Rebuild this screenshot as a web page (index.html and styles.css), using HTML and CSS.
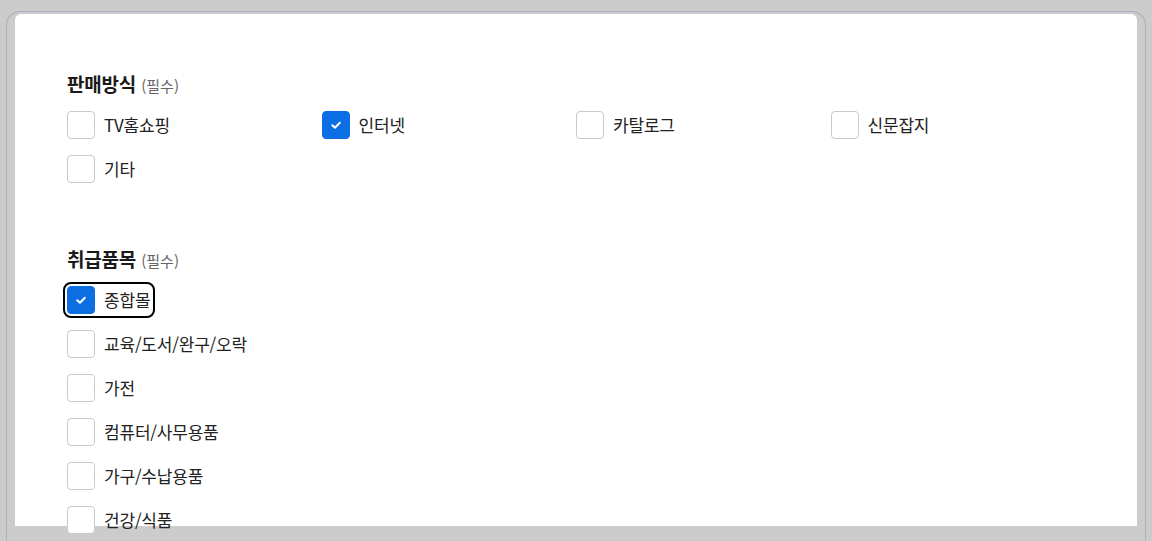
FILE: index.html
```html
<!DOCTYPE html>
<html lang="ko">
<head>
<meta charset="utf-8">
<link rel="stylesheet" href="styles.css">
</head>
<body>
<div class="frame">
  <div class="panel">
    <section class="group">
      <h2 class="title">판매방식 <span class="req">(필수)</span></h2>
      <div class="grid four">
        <label class="opt"><span class="box"></span><span class="txt">TV홈쇼핑</span></label>
        <label class="opt"><span class="box on"><svg viewBox="0 0 12 12"><path d="M3.2 6.2 5.2 8.1 8.9 4.3"/></svg></span><span class="txt">인터넷</span></label>
        <label class="opt"><span class="box"></span><span class="txt">카탈로그</span></label>
        <label class="opt"><span class="box"></span><span class="txt">신문잡지</span></label>
        <label class="opt"><span class="box"></span><span class="txt">기타</span></label>
      </div>
    </section>
    <section class="group second">
      <h2 class="title">취급품목 <span class="req">(필수)</span></h2>
      <div class="grid one">
        <label class="opt focus"><span class="box on"><svg viewBox="0 0 12 12"><path d="M3.2 6.2 5.2 8.1 8.9 4.3"/></svg></span><span class="txt">종합몰</span></label>
        <label class="opt"><span class="box"></span><span class="txt">교육/도서/완구/오락</span></label>
        <label class="opt"><span class="box"></span><span class="txt">가전</span></label>
        <label class="opt"><span class="box"></span><span class="txt">컴퓨터/사무용품</span></label>
        <label class="opt"><span class="box"></span><span class="txt">가구/수납용품</span></label>
        <label class="opt"><span class="box"></span><span class="txt">건강/식품</span></label>
      </div>
    </section>
  </div>
</div>
</body>
</html>
```
FILE: styles.css
```css
html, body {
  margin: 0;
  padding: 0;
  height: 541px;
  overflow: hidden;
  background: #cccccc;
  font-family: "Noto Sans CJK KR", "Noto Sans", sans-serif;
  color: #222;
}
.frame {
  margin: 11px 0 0 6px;
  width: 1122px;
  height: 700px;
  border: 1px solid #a9b0c4;
  border-bottom: none;
  border-radius: 14px 14px 0 0;
  padding: 2px 8px 0 8px;
  background: #cccccc;
}
.panel {
  background: #fff;
  height: 512px;
  padding: 58px 52px 0 52px;
  box-sizing: border-box;
  border-radius: 6px 6px 0 0;
}
.group.second {
  margin-top: 64px;
}
.title {
  margin: 0;
  font-size: 19px;
  font-weight: 700;
  line-height: 24px;
  color: #1a1a1a;
  letter-spacing: -0.2px;
}
.req {
  font-size: 15px;
  font-weight: 400;
  color: #666;
  letter-spacing: 0;
}
.grid {
  display: grid;
  row-gap: 16px;
  margin-top: 13px;
}
.grid.four {
  grid-template-columns: repeat(4, 1fr);
}
.grid.one {
  grid-template-columns: 1fr;
  justify-items: start;
}
.opt {
  display: flex;
  align-items: center;
  gap: 9px;
  height: 28px;
  font-size: 17px;
  line-height: 28px;
  color: #222;
  border-radius: 4px;
}
.opt.focus {
  outline: 2px solid #000;
  outline-offset: 2px;
  padding-right: 1px;
}
.box {
  width: 26px;
  height: 26px;
  border: 1px solid #c9c9c9;
  border-radius: 4px;
  background: #fff;
  display: flex;
  align-items: center;
  justify-content: center;
  flex: none;
}
.box.on {
  background: #0b6fe3;
  border-color: #0b6fe3;
}
.box svg {
  width: 16px;
  height: 16px;
  fill: none;
  stroke: #fff;
  stroke-width: 1.5;
  stroke-linecap: round;
  stroke-linejoin: round;
}
.txt {
  letter-spacing: -0.2px;
}
```
